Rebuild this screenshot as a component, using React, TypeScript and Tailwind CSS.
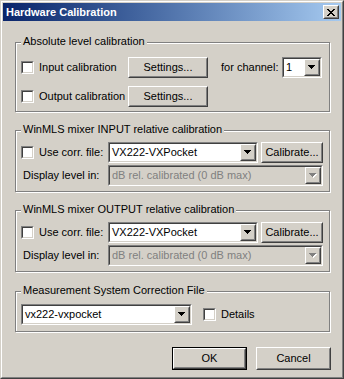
import { ReactNode } from 'react'

const face = 'bg-[#D4D0C8]'

function Raised({
  className = '',
  children,
}: {
  className?: string
  children?: ReactNode
}) {
  return (
    <div
      className={`border border-t-white border-l-white border-r-[#404040] border-b-[#404040] ${face} ${className}`}
    >
      <div className="h-full w-full border border-t-[#D4D0C8] border-l-[#D4D0C8] border-r-[#808080] border-b-[#808080] flex items-center justify-center">
        {children}
      </div>
    </div>
  )
}

function Sunken({
  className = '',
  inner = 'bg-white',
  children,
}: {
  className?: string
  inner?: string
  children?: ReactNode
}) {
  return (
    <div
      className={`border border-t-[#808080] border-l-[#808080] border-r-white border-b-white ${className}`}
    >
      <div
        className={`h-full w-full border border-t-[#404040] border-l-[#404040] border-r-[#D4D0C8] border-b-[#D4D0C8] flex items-center ${inner}`}
      >
        {children}
      </div>
    </div>
  )
}

function Arrow({ disabled = false }: { disabled?: boolean }) {
  const fill = disabled ? '#808080' : '#000000'
  return (
    <svg width="8" height="5" viewBox="0 0 8 5" shapeRendering="crispEdges">
      {disabled ? (
        <g fill="#ffffff">
          <rect x="1" y="1" width="7" height="1" />
          <rect x="2" y="2" width="5" height="1" />
          <rect x="3" y="3" width="3" height="1" />
          <rect x="4" y="4" width="1" height="1" />
        </g>
      ) : null}
      <g fill={fill}>
        <rect x="0" y="0" width="7" height="1" />
        <rect x="1" y="1" width="5" height="1" />
        <rect x="2" y="2" width="3" height="1" />
        <rect x="3" y="3" width="1" height="1" />
      </g>
    </svg>
  )
}

function Combo({
  value,
  className = '',
  disabled = false,
}: {
  value: string
  className?: string
  disabled?: boolean
}) {
  return (
    <Sunken
      className={`h-[21px] ${className}`}
      inner={disabled ? face : 'bg-white'}
    >
      <span
        className={`flex-1 pl-[2px] whitespace-nowrap overflow-hidden ${disabled ? 'text-[#808080]' : 'text-black'}`}
      >
        {value}
      </span>
      <Raised className="w-[16px] h-[17px] shrink-0">
        <Arrow disabled={disabled} />
      </Raised>
    </Sunken>
  )
}

function Check({ label, className = '' }: { label: string; className?: string }) {
  return (
    <div className={`flex items-center gap-[5px] ${className}`}>
      <Sunken className="w-[13px] h-[13px] shrink-0" />
      <span className="whitespace-nowrap">{label}</span>
    </div>
  )
}

function Group({
  label,
  className = '',
  children,
}: {
  label: string
  className?: string
  children?: ReactNode
}) {
  return (
    <div
      className={`relative w-[315px] border border-[#808080] shadow-[inset_1px_1px_0_#fff,1px_1px_0_#fff] ${className}`}
    >
      <span className="absolute -top-[8px] left-[5px] px-[2px] leading-[13px] bg-[#D4D0C8] whitespace-nowrap">
        {label}
      </span>
      {children}
    </div>
  )
}

function MixerGroup({ label, className }: { label: string; className: string }) {
  return (
    <Group label={label} className={`pt-[11px] pb-[5px] flex flex-col gap-[2px] ${className}`}>
      <div className="flex items-center pl-[5px]">
        <Check label="Use corr. file:" className="w-[87px]" />
        <Combo value="VX222-VXPocket" className="w-[150px]" />
        <Raised className="w-[62px] h-[21px] ml-[3px]">Calibrate...</Raised>
      </div>
      <div className="flex items-center pl-[7px]">
        <span className="w-[85px] whitespace-nowrap">Display level in:</span>
        <Combo value="dB rel. calibrated (0 dB max)" className="w-[215px]" disabled />
      </div>
    </Group>
  )
}

export default function App() {
  return (
    <div
      className={`w-[344px] h-[379px] ${face} border border-t-[#D4D0C8] border-l-[#D4D0C8] border-r-[#404040] border-b-[#404040] font-['Liberation_Sans',Arial,sans-serif] text-[11px] leading-[13px] text-black select-none`}
    >
      <div className="h-full border border-t-white border-l-white border-r-[#808080] border-b-[#808080] p-[1px] flex flex-col">
        <div className="h-[18px] shrink-0 flex items-center justify-between bg-linear-to-r from-[#0A246A] to-[#A6CAF0] pl-[3px] pr-[2px]">
          <span className="text-white font-bold">Hardware Calibration</span>
          <Raised className="w-[16px] h-[14px]">
            <svg width="8" height="7" viewBox="0 0 8 7" shapeRendering="crispEdges">
              <g fill="#000">
                <rect x="0" y="0" width="2" height="1" />
                <rect x="6" y="0" width="2" height="1" />
                <rect x="1" y="1" width="2" height="1" />
                <rect x="5" y="1" width="2" height="1" />
                <rect x="2" y="2" width="4" height="1" />
                <rect x="3" y="3" width="2" height="1" />
                <rect x="2" y="4" width="4" height="1" />
                <rect x="1" y="5" width="2" height="1" />
                <rect x="5" y="5" width="2" height="1" />
                <rect x="0" y="6" width="2" height="1" />
                <rect x="6" y="6" width="2" height="1" />
              </g>
            </svg>
          </Raised>
        </div>

        <div className="flex flex-col pl-[12px]">
          <Group
            label="Absolute level calibration"
            className="mt-[21px] pt-[14px] pb-[4px] flex flex-col gap-[8px]"
          >
            <div className="flex items-center pl-[5px]">
              <Check label="Input calibration" className="w-[107px]" />
              <Raised className="w-[80px] h-[21px]">Settings...</Raised>
              <span className="ml-[13px] w-[61px] whitespace-nowrap">for channel:</span>
              <Combo value="1" className="w-[40px]" />
            </div>
            <div className="flex items-center pl-[5px]">
              <Check label="Output calibration" className="w-[107px]" />
              <Raised className="w-[80px] h-[21px]">Settings...</Raised>
            </div>
          </Group>

          <MixerGroup
            label="WinMLS mixer INPUT relative calibration"
            className="mt-[18px]"
          />
          <MixerGroup
            label="WinMLS mixer OUTPUT relative calibration"
            className="mt-[18px]"
          />

          <Group
            label="Measurement System Correction File"
            className="mt-[19px] pt-[12px] pb-[6px]"
          >
            <div className="flex items-center pl-[5px]">
              <Combo value="vx222-vxpocket" className="w-[171px]" />
              <Check label="Details" className="ml-[11px]" />
            </div>
          </Group>

          <div className="flex justify-end gap-[9px] mt-[15px] pr-[10px]">
            <div className="border border-black">
              <Raised className="w-[73px] h-[21px]">OK</Raised>
            </div>
            <Raised className="w-[75px] h-[23px]">Cancel</Raised>
          </div>
        </div>
      </div>
    </div>
  )
}
